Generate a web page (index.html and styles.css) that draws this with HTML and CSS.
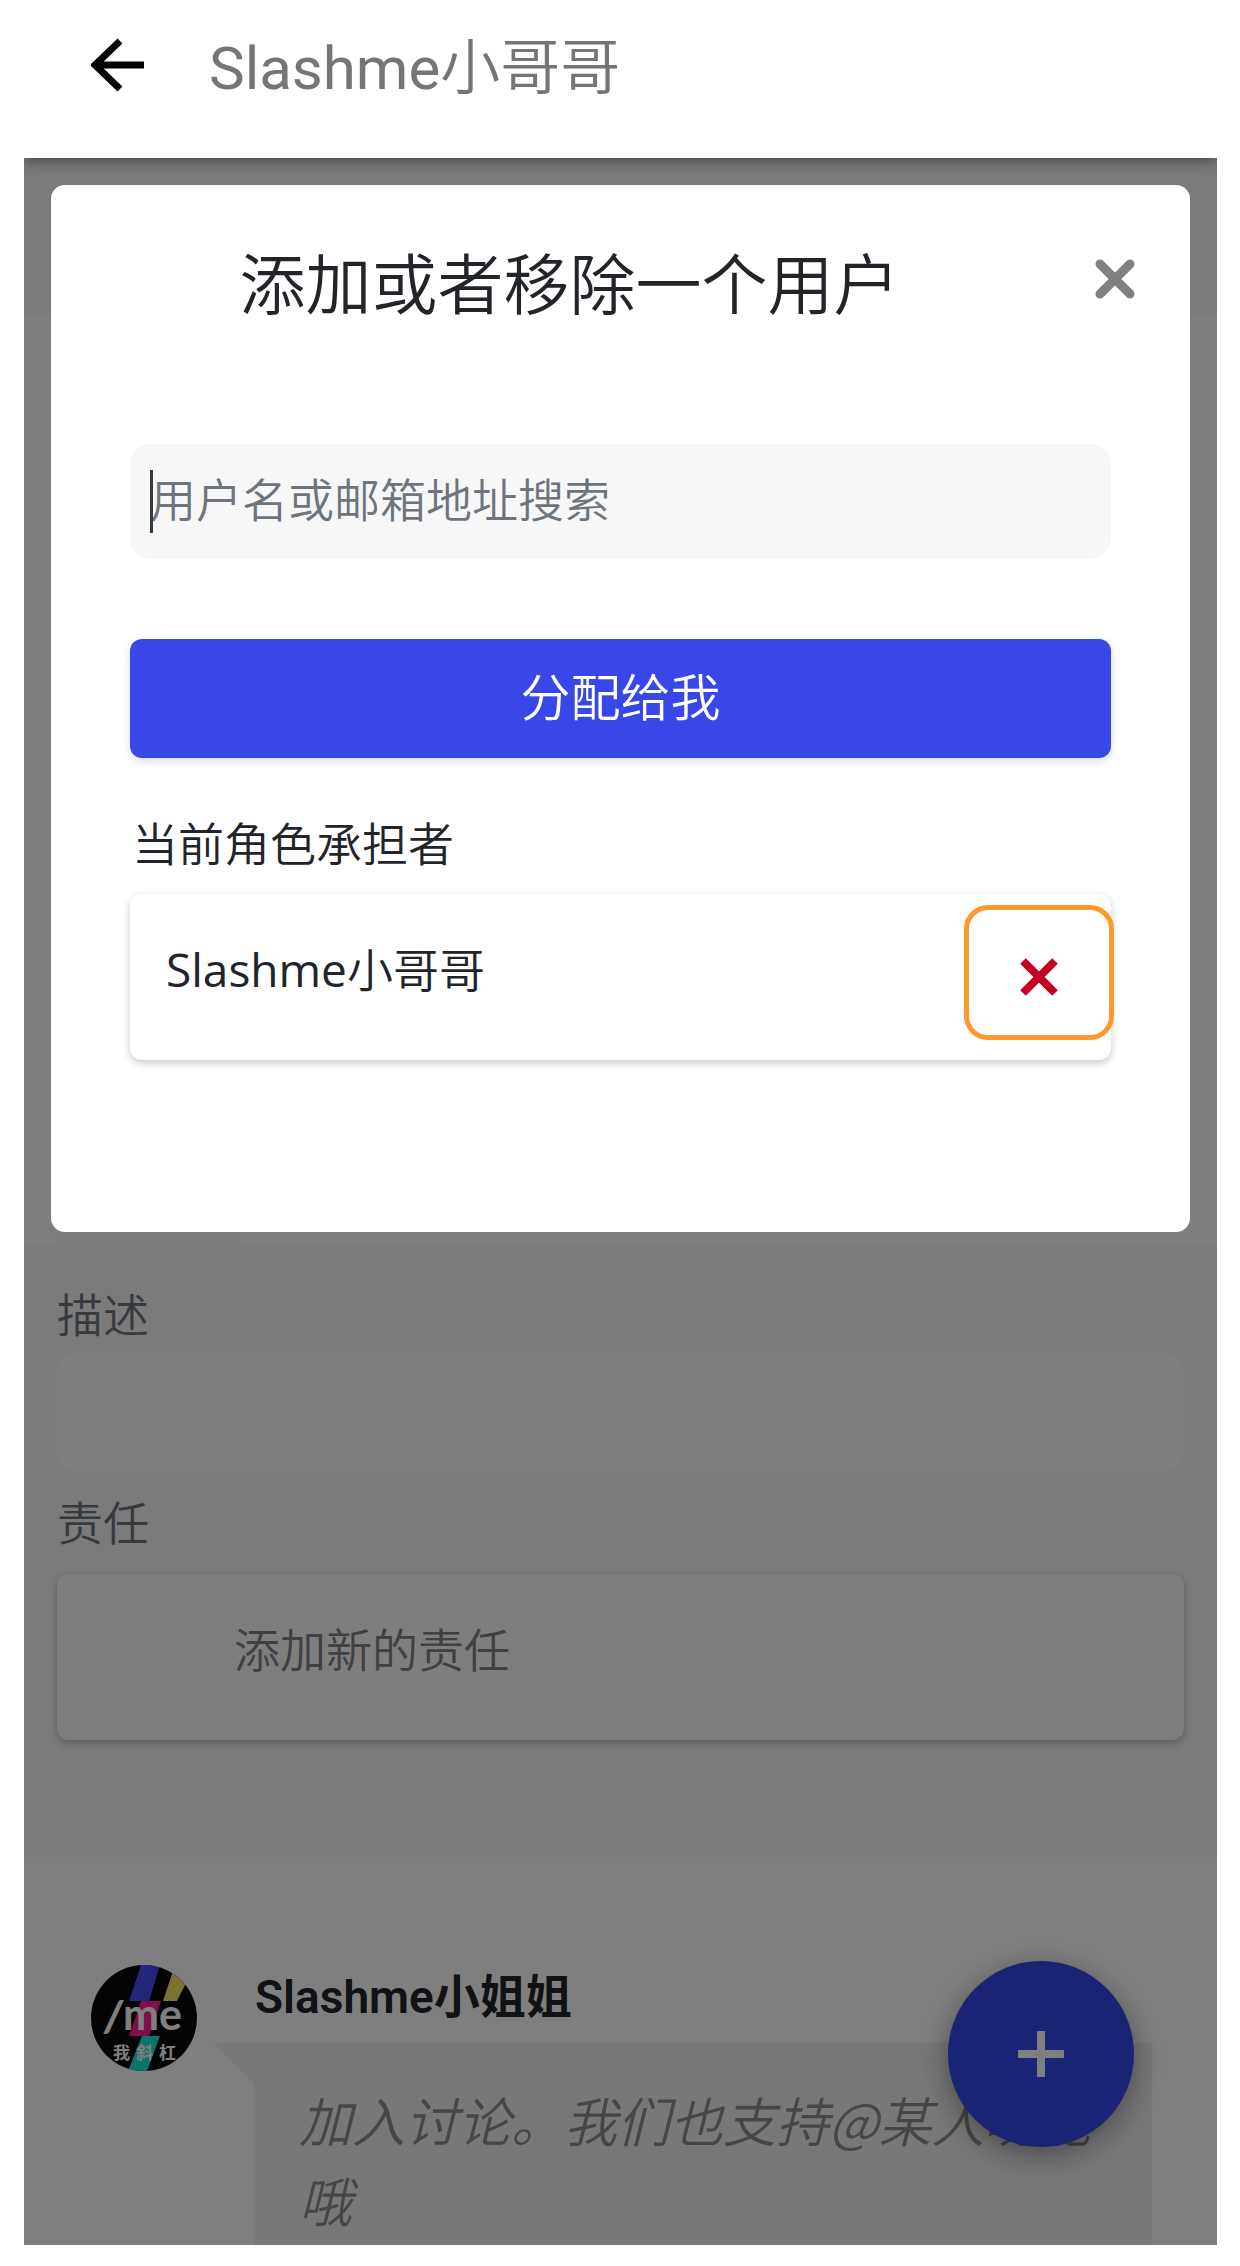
FILE: index.html
```html
<!DOCTYPE html>
<html lang="zh-CN">
<head>
<meta charset="utf-8">
<meta name="viewport" content="width=device-width, initial-scale=1">
<title>Slashme小哥哥</title>
<link rel="stylesheet" href="styles.css">
</head>
<body>
<div class="screen">
  <header class="topbar">
    <button class="icon-button back" type="button" aria-label="返回">
      <svg width="54" height="54" viewBox="0 0 54 54" aria-hidden="true"><path d="M53 27H4M29 3L4 27l25 24" fill="none" stroke="#000" stroke-width="7"/></svg>
    </button>
    <h1 class="topbar-title"><span class="latin">Slashme</span>小哥哥</h1>
  </header>

  <div class="stage">
    <main class="page">
      <div class="band"></div>
      <div class="panel"><div class="tab"></div></div>
      <section class="details">
        <label class="field-label" for="description">描述</label>
        <input class="description" id="description" type="text">
        <h2 class="field-label">责任</h2>
        <button class="add-duty" type="button">添加新的责任</button>
      </section>
      <section class="chat">
        <svg class="avatar" viewBox="0 0 106 106" role="img" aria-label="我斜杠">
          <clipPath id="disc"><circle cx="53" cy="53" r="53"/></clipPath>
          <g clip-path="url(#disc)">
            <rect width="106" height="106" fill="#080808"/>
            <path d="M50 0H69L58 36H38z" fill="#464cf4"/>
            <path d="M84 0H104L86 36H72z" fill="#f6e664"/>
            <path d="M50 36H70L58 71H38z" fill="#ff1c94"/>
            <path d="M51 71H69L56 106H37z" fill="#18e8d4"/>
            <text class="logo-slash" x="13" y="67">/</text>
            <text class="logo-word" x="32" y="65">me</text>
            <text class="logo-caption" x="22" y="94">我</text>
            <text class="logo-caption" x="45" y="94">斜</text>
            <text class="logo-caption" x="68" y="94">杠</text>
          </g>
        </svg>
        <div class="message">
          <p class="author">Slashme小姐姐</p>
          <div class="bubble">
            <svg class="tail" width="42" height="42" viewBox="0 0 42 42" aria-hidden="true"><path d="M0 0H42V42z" fill="#f1f1f1"/></svg>
            <p class="bubble-text">加入讨论。我们也支持@某人功能哦</p>
          </div>
        </div>
      </section>
      <button class="fab" type="button" aria-label="添加">
        <svg width="46" height="46" viewBox="0 0 46 46" aria-hidden="true"><path d="M23 2V44M2 23H44" stroke="#fff" stroke-width="8" stroke-linecap="round"/></svg>
      </button>
    </main>

    <div class="backdrop">
      <section class="modal" role="dialog" aria-labelledby="modal-title">
        <div class="modal-head">
          <h2 class="modal-title" id="modal-title">添加或者移除一个用户</h2>
          <button class="icon-button" type="button" aria-label="关闭">
            <svg width="40" height="40" viewBox="0 0 40 40" aria-hidden="true"><path d="M5 5L35 35M35 5L5 35" stroke="#808080" stroke-width="9" stroke-linecap="round"/></svg>
          </button>
        </div>
        <div class="search">
          <input class="search-input" type="text" placeholder="用户名或邮箱地址搜索" aria-label="用户名或邮箱地址搜索">
          <span class="caret"></span>
        </div>
        <button class="assign" type="button">分配给我</button>
        <h3 class="list-title">当前角色承担者</h3>
        <div class="member">
          <span class="member-name"><span class="latin">Slashme</span>小哥哥</span>
          <button class="remove" type="button" aria-label="移除 Slashme小哥哥">
            <svg width="38" height="38" viewBox="0 0 38 38" aria-hidden="true"><path d="M3 3L35 35M35 3L3 35" stroke="#c50022" stroke-width="8"/></svg>
          </button>
        </div>
      </section>
    </div>
  </div>
</div>
</body>
</html>
```
FILE: styles.css
```css
* {
  box-sizing: border-box;
}

body {
  margin: 0;
  padding: 0 23px 20px 24px;
  background: #fff;
  color: #212529;
  font-family: "Open Sans", "Noto Sans CJK SC", sans-serif;
  font-size: 46px;
  font-weight: 350;
  line-height: 60px;
}

h1, h2, h3, p {
  margin: 0;
  font-size: inherit;
  font-weight: inherit;
}

button, input {
  border: 0;
  margin: 0;
  padding: 0;
  background: none;
  color: inherit;
  font: inherit;
}

svg {
  display: block;
}

.icon-button {
  flex: none;
}

.latin {
  font-weight: 400;
}

/* Top bar */
.topbar {
  position: relative;
  z-index: 2;
  display: flex;
  align-items: flex-start;
  gap: 64px;
  padding: 24px 67px 44px;
  background: #fff;
  box-shadow: 0 4px 12px rgba(0, 0, 0, 0.4);
  clip-path: inset(0 0 -24px 0);
}

.back {
  padding-top: 14px;
}

.topbar-title {
  color: #757575;
  font-family: Roboto, "Noto Sans CJK SC", sans-serif;
  font-size: 60px;
  line-height: 90px;
}

/* Page under the dialog */
.stage {
  position: relative;
}

.page {
  position: relative;
  overflow: hidden;
  background: #fff;
}

.band {
  height: 157px;
  background: #f7f7f7;
}

.panel {
  display: flex;
  align-items: flex-end;
  min-height: 931px;
  padding-left: 33px;
  background: #fdfdfd;
}

.tab {
  width: 184px;
  height: 80px;
  background: #f7f7f7;
}

.details {
  padding: 38px 33px 117px;
  background: #f7f7f7;
}

.field-label {
  display: block;
  color: #6c757d;
}

.description {
  width: 100%;
  height: 120px;
  margin: 8px 0 20px;
  border-radius: 20px;
  background: #fdfdfd;
}

.add-duty {
  display: block;
  width: 100%;
  margin-top: 22px;
  padding: 45px 177px 61px;
  border-radius: 12px;
  background: #fdfdfd;
  box-shadow: 0 3px 8px rgba(0, 0, 0, 0.25);
  color: #808080;
  text-align: left;
}

.chat {
  display: flex;
  gap: 58px;
  padding: 108px 65px 0 67px;
}

.avatar {
  flex: none;
  width: 106px;
  height: 106px;
}

.logo-slash,
.logo-word {
  fill: #fff;
  font-family: Lato, sans-serif;
  font-size: 43px;
  font-weight: 700;
}

.logo-slash {
  font-style: italic;
  font-weight: 900;
}

.logo-caption {
  fill: #fff;
  font-size: 17px;
  font-weight: 700;
}

.message {
  flex: 1;
}

.author {
  padding: 2px 0 16px;
  font-family: Roboto, "Noto Sans CJK SC", sans-serif;
  font-weight: 600;
}

.bubble {
  position: relative;
  padding: 36px 44px 6px;
  background: #f1f1f1;
}

.tail {
  position: absolute;
  top: 0;
  right: 100%;
}

.bubble-text {
  color: #8c8c8c;
  font-family: "Noto Sans CJK SC", sans-serif;
  font-size: 53px;
  font-style: italic;
  line-height: 80px;
}

.fab {
  position: absolute;
  right: 83px;
  bottom: 98px;
  display: grid;
  place-items: center;
  width: 186px;
  height: 186px;
  border-radius: 50%;
  background: #3747e8;
  box-shadow: 0 8px 30px rgba(0, 0, 0, 0.4);
}

/* Dialog */
.backdrop {
  position: absolute;
  inset: 0;
  padding: 27px;
  background: rgba(0, 0, 0, 0.5);
}

.modal {
  padding: 54px 79px 172px;
  border-radius: 14px;
  background: #fff;
}

.modal-head {
  display: flex;
  align-items: flex-start;
  padding-top: 20px;
  margin-right: -24px;
}

.modal-title {
  flex: 1;
  margin-top: -20px;
  padding-right: 86px;
  font-size: 66px;
  line-height: 88px;
  text-align: center;
}

.search {
  position: relative;
  margin-top: 117px;
}

.search-input {
  display: block;
  width: 100%;
  height: 115px;
  padding: 0 20px 6px;
  border-radius: 20px;
  background: #f7f7f7;
}

.search-input::placeholder {
  color: #6c757d;
  opacity: 1;
}

.caret {
  position: absolute;
  top: 26px;
  left: 20px;
  width: 3px;
  height: 63px;
  background: #343a40;
}

.assign {
  display: block;
  width: 100%;
  margin-top: 80px;
  padding: 28px 20px 31px;
  border-radius: 12px;
  background: #3747e8;
  box-shadow: 0 3px 8px rgba(55, 71, 232, 0.2);
  color: #fff;
  font-size: 50px;
}

.list-title {
  margin: 55px 2px 21px;
}

.member {
  display: flex;
  align-items: flex-start;
  justify-content: space-between;
  padding: 11px 0 20px 36px;
  border-radius: 12px;
  background: #fff;
  box-shadow: 0 3px 8px rgba(0, 0, 0, 0.22);
}

.member-name {
  padding-top: 34px;
}

.remove {
  display: grid;
  place-items: center;
  width: 150px;
  height: 135px;
  margin-right: -3px;
  padding-top: 8px;
  border: 5px solid #ff9828;
  border-radius: 24px;
}
```
